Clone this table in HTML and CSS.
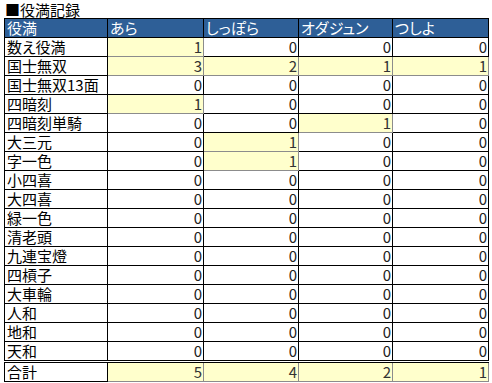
FILE: index.html
```html
<!DOCTYPE html>
<html lang="ja">
<head>
<meta charset="utf-8">
<title>役満記録</title>
<link rel="stylesheet" href="styles.css">
</head>
<body>
<div class="sheet">
  <div class="title">■役満記録</div>
  <table class="grid">
    <colgroup>
      <col class="c-name"><col class="c-a"><col class="c-b"><col class="c-c"><col class="c-d">
    </colgroup>
    <thead>
      <tr><th>役満</th><th>あら</th><th>しっぽら</th><th>オダジュン</th><th>つしよ</th></tr>
    </thead>
    <tbody>
      <tr><td class="name">数え役満</td><td class="hit">1</td><td>0</td><td>0</td><td>0</td></tr>
      <tr><td class="name">国士無双</td><td class="hit">3</td><td class="hit">2</td><td class="hit">1</td><td class="hit">1</td></tr>
      <tr><td class="name">国士無双13面</td><td>0</td><td>0</td><td>0</td><td>0</td></tr>
      <tr><td class="name">四暗刻</td><td class="hit">1</td><td>0</td><td>0</td><td>0</td></tr>
      <tr><td class="name">四暗刻単騎</td><td>0</td><td>0</td><td class="hit">1</td><td>0</td></tr>
      <tr><td class="name">大三元</td><td>0</td><td class="hit">1</td><td>0</td><td>0</td></tr>
      <tr><td class="name">字一色</td><td>0</td><td class="hit">1</td><td>0</td><td>0</td></tr>
      <tr><td class="name">小四喜</td><td>0</td><td>0</td><td>0</td><td>0</td></tr>
      <tr><td class="name">大四喜</td><td>0</td><td>0</td><td>0</td><td>0</td></tr>
      <tr><td class="name">緑一色</td><td>0</td><td>0</td><td>0</td><td>0</td></tr>
      <tr><td class="name">清老頭</td><td>0</td><td>0</td><td>0</td><td>0</td></tr>
      <tr><td class="name">九連宝燈</td><td>0</td><td>0</td><td>0</td><td>0</td></tr>
      <tr><td class="name">四槓子</td><td>0</td><td>0</td><td>0</td><td>0</td></tr>
      <tr><td class="name">大車輪</td><td>0</td><td>0</td><td>0</td><td>0</td></tr>
      <tr><td class="name">人和</td><td>0</td><td>0</td><td>0</td><td>0</td></tr>
      <tr><td class="name">地和</td><td>0</td><td>0</td><td>0</td><td>0</td></tr>
      <tr><td class="name">天和</td><td>0</td><td>0</td><td>0</td><td>0</td></tr>
    </tbody>
    <tfoot>
      <tr><td class="name">合計</td><td class="hit">5</td><td class="hit">4</td><td class="hit">2</td><td class="hit">1</td></tr>
    </tfoot>
  </table>
</div>
</body>
</html>
```
FILE: styles.css
```css
html, body {
  margin: 0;
  padding: 0;
  background: #ffffff;
}
body {
  font-family: "Noto Sans CJK JP", "Noto Sans", sans-serif;
  font-size: 15px;
  color: #000;
  font-feature-settings: "palt" 1;
}
.sheet {
  padding: 0 0 0 4px;
}
.title {
  height: 18px;
  line-height: 19px;
  font-size: 15px;
  padding-left: 1px;
  white-space: nowrap;
}
.grid {
  border-collapse: collapse;
  table-layout: fixed;
  width: 484px;
  font-size: 15px;
}
.c-name { width: 103px; }
.c-a { width: 96px; }
.c-b { width: 95px; }
.c-c { width: 94px; }
.c-d { width: 96px; }
.grid th,
.grid td {
  height: 19px;
  line-height: 18px;
  padding: 0 1px 0 2px;
  border: 1px solid #000;
  font-weight: normal;
  font-size: 15px;
  white-space: nowrap;
  overflow: hidden;
  box-sizing: border-box;
}
.grid th {
  background: #2e5f97;
  color: #fff;
  text-align: left;
}
.grid td {
  text-align: right;
  color: #222;
}
.grid td.name {
  text-align: left;
  color: #000;
}
.grid td.hit {
  background: #ffffcc;
  border-color: #8c8c8c;
  color: #333;
}
.grid tfoot td {
  height: 18px;
  border-top: 3px double #000;
}
.grid tfoot td.hit {
  border-color: #8c8c8c;
  border-top: 3px double #000;
}
```
